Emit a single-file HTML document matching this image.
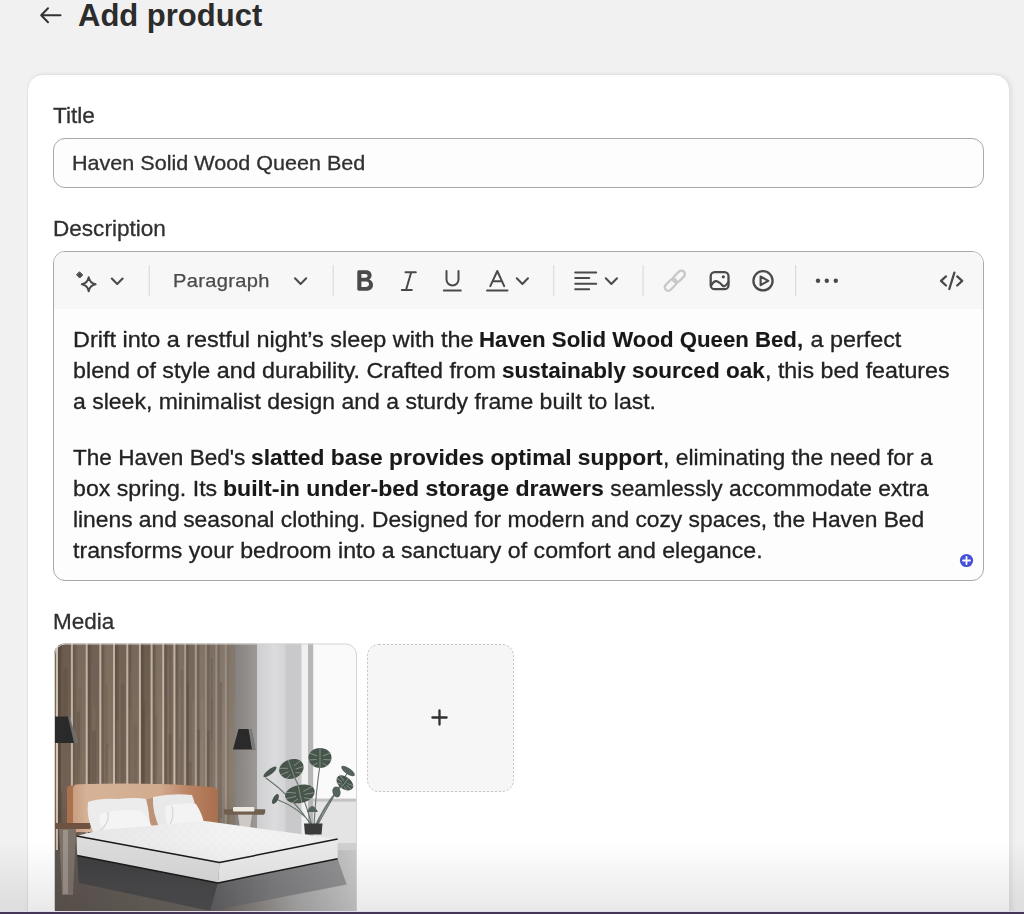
<!DOCTYPE html>
<html><head><meta charset="utf-8">
<style>
*{box-sizing:border-box;margin:0;padding:0}
html,body{width:1024px;height:914px;overflow:hidden;background:#f1f1f1;font-family:"Liberation Sans",sans-serif;color:#303030}
.abs{position:absolute}
.t{position:absolute;white-space:pre;transform-origin:0 0;color:#303030;-webkit-text-stroke:0.3px #303030}
#card{left:27px;top:74px;width:983px;height:900px;background:#fff;border-radius:16px;border:1px solid #e3e3e3;box-shadow:2px 0 4px rgba(0,0,0,.07)}
#input{left:53px;top:138px;width:931px;height:50px;border:1px solid #a9a9a9;border-radius:12px;background:#fdfdfd}
#editor{left:53px;top:251px;width:931px;height:330px;border:1px solid #a9a9a9;border-radius:12px;background:#fdfdfd;overflow:hidden}
#toolbar{position:absolute;left:0;top:0;width:100%;height:57px;background:#f7f7f7}
.body{font-size:22px;line-height:31px;color:#222;-webkit-text-stroke:0.3px #222}
.body b{color:#181818;-webkit-text-stroke:0.1px #181818}
.body b{font-weight:bold}
#addbtn{left:367px;top:643.5px;width:147px;height:148px;border-radius:12px;background:#f6f6f6}
#fade{left:0;top:840px;width:1024px;height:72px;background:linear-gradient(rgba(0,0,0,0),rgba(0,0,0,.085))}
#purple{left:0;top:911px;width:1024px;height:3px;background:#463656;border-top:1px solid #e4dce8}
</style></head><body>
<svg class="abs" style="left:0;top:0" width="80" height="40" viewBox="0 0 80 40"><path d="M60.5 15.2H41.5M48 8.2L41.2 15.2L48 22.2" fill="none" stroke="#333" stroke-width="2" stroke-linecap="round" stroke-linejoin="round"/></svg>
<div class="t" style="left:78px;top:-2px;font-size:31px;line-height:36px;font-weight:bold;color:#2c2c2c;-webkit-text-stroke:0">Add product</div>
<div id="card" class="abs"></div>
<div class="t" style="left:53px;top:103px;font-size:22px;line-height:26px;transform:scaleX(1.028)">Title</div>
<div id="input" class="abs"></div>
<div class="t" style="left:72px;top:151px;font-size:21px;line-height:24px;transform:scaleX(1.027)">Haven Solid Wood Queen Bed</div>
<div class="t" style="left:53px;top:216px;font-size:22px;line-height:26px;transform:scaleX(1.025)">Description</div>
<div id="editor" class="abs"><div id="toolbar"></div></div>
<svg class="abs" style="left:0;top:0" width="1024" height="320" viewBox="0 0 1024 320">
<g fill="none" stroke="#4a4a4a" stroke-width="2" stroke-linecap="round" stroke-linejoin="round">
<path d="M79.7 272L82.7 275L79.7 278L76.7 275Z" fill="#4a4a4a" stroke-width="1"/>
<path d="M88.7 277.3Q89.8 283.2 95.6 284.3Q89.8 285.4 88.7 291.2Q87.6 285.4 81.8 284.3Q87.6 283.2 88.7 277.3Z"/>
<path d="M111.8 278.6L117.2 284L122.6 278.6" stroke-width="2.1"/>
<path d="M295 278.3L300.6 284L306.2 278.3"/>
<path d="M446.5 271v8.5a6 6 0 0 0 12 0V271"/>
<path d="M443.8 290.5h17"/>
<path d="M405.5 272.2h10.3M401.8 290h10M411.2 272.2L406 290"/>
<path d="M490.3 286.2L497.3 271L504.2 286.2M492.6 281.2h9.3"/>
<path d="M487 290.5h20.5"/>
<path d="M516.8 278.3L522.4 284L528 278.3"/>
<path d="M575.2 272.5h21M575.2 278.1h14M575.2 283.7h21M575.2 289.2h14"/>
<path d="M605.8 278.3L611.4 284L617 278.3"/>
<rect x="710.7" y="272.2" width="17.8" height="17" rx="4" stroke-width="2.3"/>
<circle cx="723.3" cy="276.8" r="1.6" fill="#4a4a4a" stroke="none"/>
<path d="M711.5 285Q714.5 280 717.5 281.5T722.5 285.5T728.5 282" stroke-width="2.2"/>
<circle cx="763" cy="280.8" r="9.6" stroke-width="2.3"/>
<path d="M760.6 276.5L768.3 280.8L760.6 285.2Z" stroke-width="2.1"/>
<path d="M946 276.4L941 280.9L946 285.5M957.2 276.4L962.2 280.9L957.2 285.5M954.4 272.6L949.3 289" stroke-width="2.3"/>
</g>
<g transform="rotate(-45 674.8 280.7)" fill="none" stroke="#c8c8c8" stroke-width="2.3"><rect x="662" y="277.2" width="14" height="7" rx="3.5"/><rect x="673.6" y="277.2" width="14" height="7" rx="3.5"/></g>
<g fill="#4a4a4a"><circle cx="818" cy="280.8" r="2.2"/><circle cx="826.8" cy="280.8" r="2.2"/><circle cx="835.8" cy="280.8" r="2.2"/></g>
<path fill-rule="evenodd" fill="#4a4a4a" d="M359 270.2H366C369.5 270.2 371.6 272.4 371.6 275.2C371.6 277.2 370.6 278.7 369.2 279.5C371.4 280.3 373 282.3 373 285C373 288.3 370.6 290.7 367 290.7H359C358 290.7 357.3 290 357.3 289V271.9C357.3 270.9 358 270.2 359 270.2ZM361.4 273.9H365.4C366.8 273.9 367.6 274.6 367.6 275.8C367.6 277 366.8 277.8 365.4 277.8H361.4ZM361.4 281.5H366.3C368 281.5 369 282.5 369 284.1C369 285.8 368 286.9 366.3 286.9H361.4Z"/>
<g fill="#dcdcdc"><rect x="148.7" y="265" width="1.2" height="31"/><rect x="332.6" y="265" width="1.2" height="31"/><rect x="553.1" y="265" width="1.2" height="31"/><rect x="642.5" y="265" width="1.2" height="31"/><rect x="795" y="265" width="1.2" height="31"/></g>
</svg>
<div class="abs" style="left:173px;top:269.5px;font-size:18.5px;line-height:22px;letter-spacing:0.3px;color:#4a4a4a;white-space:pre;transform-origin:0 0;transform:scaleX(1.085);-webkit-text-stroke:0.25px #4a4a4a">Paragraph</div>
<div class="t body" style="left:72.50px;top:324.18px;transform:scaleX(1.0645)">Drift into a restful night’s sleep with the </div>
<div class="t body" style="left:479.49px;top:324.18px;transform:scaleX(1.0094)"><b>Haven Solid Wood Queen Bed,</b></div>
<div class="t body" style="left:804.37px;top:324.18px;transform:scaleX(1.0612)"> a perfect</div>
<div class="t body" style="left:72.50px;top:355.48px;transform:scaleX(1.0589)">blend of style and durability. Crafted from </div>
<div class="t body" style="left:501.98px;top:355.48px;transform:scaleX(1.0230)"><b>sustainably sourced oak</b></div>
<div class="t body" style="left:765.29px;top:355.48px;transform:scaleX(1.0552)">, this bed features</div>
<div class="t body" style="left:72.50px;top:386.28px;transform:scaleX(1.0455)">a sleek, minimalist design and a sturdy frame built to last.</div>
<div class="t body" style="left:72.50px;top:442.18px;transform:scaleX(1.0257)">The Haven Bed's </div>
<div class="t body" style="left:251.16px;top:442.18px;transform:scaleX(1.0361)"><b>slatted base provides optimal support</b></div>
<div class="t body" style="left:662.92px;top:442.18px;transform:scaleX(1.0405)">, eliminating the need for a</div>
<div class="t body" style="left:72.50px;top:472.68px;transform:scaleX(1.0529)">box spring. Its </div>
<div class="t body" style="left:223.15px;top:472.68px;transform:scaleX(1.0493)"><b>built-in under-bed storage drawers</b></div>
<div class="t body" style="left:603.77px;top:472.68px;transform:scaleX(1.0332)"> seamlessly accommodate extra</div>
<div class="t body" style="left:72.50px;top:503.68px;transform:scaleX(1.0357)">linens and seasonal clothing. Designed for modern and cozy spaces, the Haven Bed</div>
<div class="t body" style="left:72.50px;top:534.88px;transform:scaleX(1.0521)">transforms your bedroom into a sanctuary of comfort and elegance.</div>
<svg class="abs" style="left:959px;top:553px" width="15" height="15" viewBox="0 0 15 15"><circle cx="7.5" cy="7.5" r="6.6" fill="#4650d8"/><path d="M7.5 4v7M4 7.5h7" stroke="#fff" stroke-width="1.8" stroke-linecap="round"/></svg>
<div class="t" style="left:53px;top:609px;font-size:22px;line-height:26px;transform:scaleX(1.022)">Media</div>
<svg class="abs" style="left:54px;top:643px" width="303" height="271" viewBox="54 643 303 271">
<defs>
<filter id="bl" x="-5%" y="-5%" width="110%" height="110%"><feGaussianBlur stdDeviation="0.45"/></filter>
<clipPath id="pc"><rect x="54" y="643.5" width="302.8" height="290" rx="11"/></clipPath>
<clipPath id="mt"><path d="M76.6 836L100 830L205 821L337.6 839L219.5 862.6Z"/></clipPath>
<linearGradient id="wood" x1="0" x2="1" y1="0" y2="0"><stop offset="0" stop-color="#7a6a5c"/><stop offset=".5" stop-color="#7e6e60"/><stop offset="1" stop-color="#8a7e72"/></linearGradient>
<linearGradient id="woodv" x1="0" x2="0" y1="0" y2="1"><stop offset="0" stop-color="#000" stop-opacity=".05"/><stop offset=".6" stop-color="#000" stop-opacity="0"/><stop offset="1" stop-color="#000" stop-opacity=".15"/></linearGradient>
<linearGradient id="conc" x1="0" x2="1"><stop offset="0" stop-color="#858280"/><stop offset="1" stop-color="#9b9896"/></linearGradient>
<linearGradient id="wall" x1="0" x2="1"><stop offset="0" stop-color="#cdced0"/><stop offset=".6" stop-color="#dcdcde"/><stop offset="1" stop-color="#d4d4d6"/></linearGradient>
<linearGradient id="hb" x1="0" x2="1"><stop offset="0" stop-color="#c99e80"/><stop offset=".1" stop-color="#d6b398"/><stop offset=".6" stop-color="#d2ab8e"/><stop offset=".8" stop-color="#b98262"/><stop offset="1" stop-color="#a86f4e"/></linearGradient>
<linearGradient id="mtop" x1="0" x2="1" y1="0" y2="0"><stop offset="0" stop-color="#e6e6e6"/><stop offset=".6" stop-color="#f3f3f3"/><stop offset="1" stop-color="#f0f0f0"/></linearGradient>
<linearGradient id="floorL" x1="0" x2="1"><stop offset="0" stop-color="#5c544e"/><stop offset=".55" stop-color="#6c6660"/><stop offset=".8" stop-color="#a9a8a8"/><stop offset="1" stop-color="#c9c9ca"/></linearGradient>
<linearGradient id="baseL" x1="0" x2="0" y1="0" y2="1"><stop offset="0" stop-color="#3e3e40"/><stop offset="1" stop-color="#505052"/></linearGradient>
<linearGradient id="baseR" x1="0" x2="1"><stop offset="0" stop-color="#606063"/><stop offset=".45" stop-color="#7c7c7f"/><stop offset="1" stop-color="#939396"/></linearGradient>
</defs>
<g clip-path="url(#pc)"><g filter="url(#bl)">
<rect x="54" y="643" width="303" height="270" fill="#e9e9ea"/>
<rect x="54" y="643" width="182" height="240" fill="url(#wood)"/>
<rect x="58.0" y="643" width="12.9" height="240" fill="#5e4e42" opacity="0.35"/><rect x="58.0" y="643" width="4.5" height="240" fill="#2e241e" opacity="0.10"/><rect x="60.9" y="721.1" width="2.0" height="70.1" fill="#a89482" opacity="0.14"/><rect x="63.3" y="668.8" width="4.2" height="72.0" fill="#3a2c22" opacity="0.12"/><rect x="58.8" y="742.2" width="2.8" height="77.3" fill="#3a2c22" opacity="0.09"/><rect x="72.9" y="643" width="12.8" height="240" fill="#8a7a6a" opacity="0.35"/><rect x="72.9" y="643" width="4.5" height="240" fill="#2e241e" opacity="0.10"/><rect x="78.1" y="760.2" width="2.7" height="66.5" fill="#a89482" opacity="0.18"/><rect x="76.7" y="711.5" width="3.1" height="138.4" fill="#3a2c22" opacity="0.16"/><rect x="78.1" y="687.7" width="3.4" height="136.7" fill="#3a2c22" opacity="0.07"/><rect x="87.7" y="643" width="11.6" height="240" fill="#6a5a4c" opacity="0.35"/><rect x="87.7" y="643" width="4.1" height="240" fill="#2e241e" opacity="0.10"/><rect x="92.7" y="706.8" width="2.7" height="168.8" fill="#a89482" opacity="0.13"/><rect x="90.6" y="664.6" width="2.1" height="169.2" fill="#a89482" opacity="0.07"/><rect x="92.0" y="730.5" width="3.7" height="100.3" fill="#3a2c22" opacity="0.20"/><rect x="101.3" y="643" width="11.7" height="240" fill="#93826f" opacity="0.35"/><rect x="101.3" y="643" width="4.1" height="240" fill="#2e241e" opacity="0.10"/><rect x="105.5" y="684.0" width="1.8" height="190.7" fill="#3a2c22" opacity="0.12"/><rect x="107.6" y="748.1" width="2.9" height="103.9" fill="#a89482" opacity="0.16"/><rect x="106.0" y="743.8" width="2.6" height="192.3" fill="#3a2c22" opacity="0.13"/><rect x="115.0" y="643" width="11.3" height="240" fill="#6e5d50" opacity="0.35"/><rect x="115.0" y="643" width="4.0" height="240" fill="#2e241e" opacity="0.10"/><rect x="115.5" y="720.7" width="3.2" height="199.0" fill="#a89482" opacity="0.18"/><rect x="120.7" y="684.6" width="3.7" height="191.7" fill="#3a2c22" opacity="0.11"/><rect x="118.9" y="677.5" width="1.9" height="163.4" fill="#a89482" opacity="0.12"/><rect x="128.3" y="643" width="10.6" height="240" fill="#7f6e5e" opacity="0.35"/><rect x="128.3" y="643" width="3.7" height="240" fill="#2e241e" opacity="0.10"/><rect x="128.9" y="708.9" width="2.4" height="183.7" fill="#a89482" opacity="0.17"/><rect x="133.5" y="724.9" width="3.7" height="113.3" fill="#3a2c22" opacity="0.09"/><rect x="129.6" y="671.0" width="1.8" height="127.9" fill="#a89482" opacity="0.14"/><rect x="140.9" y="643" width="9.7" height="240" fill="#5a4a3e" opacity="0.35"/><rect x="140.9" y="643" width="3.4" height="240" fill="#2e241e" opacity="0.10"/><rect x="142.8" y="707.2" width="1.5" height="145.4" fill="#3a2c22" opacity="0.10"/><rect x="145.6" y="717.1" width="2.3" height="154.7" fill="#a89482" opacity="0.07"/><rect x="143.6" y="700.8" width="2.0" height="116.1" fill="#3a2c22" opacity="0.09"/><rect x="152.6" y="643" width="9.6" height="240" fill="#8c7b6b" opacity="0.35"/><rect x="152.6" y="643" width="3.4" height="240" fill="#2e241e" opacity="0.10"/><rect x="155.6" y="715.1" width="1.4" height="74.3" fill="#3a2c22" opacity="0.14"/><rect x="159.0" y="651.4" width="2.5" height="89.1" fill="#a89482" opacity="0.11"/><rect x="159.0" y="699.9" width="2.5" height="76.1" fill="#a89482" opacity="0.13"/><rect x="164.2" y="643" width="9.2" height="240" fill="#705f52" opacity="0.35"/><rect x="164.2" y="643" width="3.2" height="240" fill="#2e241e" opacity="0.10"/><rect x="167.3" y="660.3" width="1.8" height="165.0" fill="#a89482" opacity="0.16"/><rect x="169.5" y="645.8" width="1.4" height="193.1" fill="#3a2c22" opacity="0.13"/><rect x="168.6" y="734.0" width="3.0" height="101.7" fill="#3a2c22" opacity="0.15"/><rect x="175.4" y="643" width="8.7" height="240" fill="#857565" opacity="0.35"/><rect x="175.4" y="643" width="3.0" height="240" fill="#2e241e" opacity="0.10"/><rect x="179.6" y="687.0" width="1.6" height="83.4" fill="#a89482" opacity="0.17"/><rect x="179.3" y="737.6" width="2.3" height="166.2" fill="#3a2c22" opacity="0.09"/><rect x="180.4" y="670.2" width="2.5" height="132.5" fill="#3a2c22" opacity="0.11"/><rect x="186.1" y="643" width="8.7" height="240" fill="#6c5c50" opacity="0.35"/><rect x="186.1" y="643" width="3.0" height="240" fill="#2e241e" opacity="0.10"/><rect x="192.1" y="699.7" width="2.6" height="87.1" fill="#a89482" opacity="0.14"/><rect x="188.8" y="761.6" width="2.9" height="193.7" fill="#3a2c22" opacity="0.11"/><rect x="186.7" y="683.5" width="2.0" height="127.6" fill="#3a2c22" opacity="0.20"/><rect x="196.8" y="643" width="8.1" height="240" fill="#8a7b6e" opacity="0.35"/><rect x="196.8" y="643" width="2.8" height="240" fill="#2e241e" opacity="0.10"/><rect x="199.5" y="739.0" width="2.2" height="71.9" fill="#a89482" opacity="0.15"/><rect x="201.2" y="700.4" width="2.4" height="85.0" fill="#a89482" opacity="0.17"/><rect x="197.3" y="729.6" width="2.7" height="124.8" fill="#3a2c22" opacity="0.16"/><rect x="206.9" y="643" width="8.4" height="240" fill="#7a6c60" opacity="0.35"/><rect x="206.9" y="643" width="2.9" height="240" fill="#2e241e" opacity="0.10"/><rect x="211.2" y="658.2" width="1.3" height="81.2" fill="#3a2c22" opacity="0.19"/><rect x="210.5" y="699.9" width="2.2" height="191.2" fill="#3a2c22" opacity="0.08"/><rect x="207.0" y="730.2" width="2.6" height="74.4" fill="#3a2c22" opacity="0.16"/><rect x="217.3" y="643" width="7.5" height="240" fill="#8c8074" opacity="0.35"/><rect x="217.3" y="643" width="2.6" height="240" fill="#2e241e" opacity="0.10"/><rect x="219.6" y="742.1" width="2.4" height="89.5" fill="#a89482" opacity="0.10"/><rect x="219.9" y="682.1" width="2.2" height="136.2" fill="#3a2c22" opacity="0.18"/><rect x="222.1" y="698.0" width="1.5" height="141.7" fill="#a89482" opacity="0.19"/>
<rect x="58.0" y="643" width="2.5" height="240" fill="#4a3c32" opacity="0.24"/><rect x="56.0" y="643" width="2" height="240" fill="#dccbb9" opacity="0.80"/><rect x="58.0" y="643" width="2.5" height="240" fill="#4a3c32" opacity="0.24"/><rect x="56.0" y="643" width="2" height="240" fill="#dccbb9" opacity="0.80"/><rect x="72.9" y="643" width="2.5" height="240" fill="#4a3c32" opacity="0.24"/><rect x="70.9" y="643" width="2" height="240" fill="#dccbb9" opacity="0.80"/><rect x="87.7" y="643" width="2.5" height="240" fill="#4a3c32" opacity="0.24"/><rect x="85.7" y="643" width="2" height="240" fill="#dccbb9" opacity="0.80"/><rect x="101.3" y="643" width="2.5" height="240" fill="#4a3c32" opacity="0.24"/><rect x="99.3" y="643" width="2" height="240" fill="#dccbb9" opacity="0.80"/><rect x="115.0" y="643" width="2.5" height="240" fill="#4a3c32" opacity="0.24"/><rect x="113.0" y="643" width="2" height="240" fill="#dccbb9" opacity="0.80"/><rect x="128.3" y="643" width="2.5" height="240" fill="#4a3c32" opacity="0.24"/><rect x="126.3" y="643" width="2" height="240" fill="#dccbb9" opacity="0.80"/><rect x="140.9" y="643" width="2.5" height="240" fill="#4a3c32" opacity="0.24"/><rect x="138.9" y="643" width="2" height="240" fill="#dccbb9" opacity="0.80"/><rect x="152.6" y="643" width="2.5" height="240" fill="#4a3c32" opacity="0.24"/><rect x="150.6" y="643" width="2" height="240" fill="#dccbb9" opacity="0.80"/><rect x="164.2" y="643" width="2.5" height="240" fill="#4a3c32" opacity="0.24"/><rect x="162.2" y="643" width="2" height="240" fill="#dccbb9" opacity="0.80"/><rect x="175.4" y="643" width="2.5" height="240" fill="#4a3c32" opacity="0.24"/><rect x="173.4" y="643" width="2" height="240" fill="#dccbb9" opacity="0.80"/><rect x="186.1" y="643" width="2.5" height="240" fill="#4a3c32" opacity="0.15"/><rect x="184.1" y="643" width="2" height="240" fill="#dccbb9" opacity="0.50"/><rect x="196.8" y="643" width="2.5" height="240" fill="#4a3c32" opacity="0.15"/><rect x="194.8" y="643" width="2" height="240" fill="#dccbb9" opacity="0.50"/><rect x="206.9" y="643" width="2.5" height="240" fill="#4a3c32" opacity="0.09"/><rect x="204.9" y="643" width="2" height="240" fill="#dccbb9" opacity="0.30"/><rect x="217.3" y="643" width="2.5" height="240" fill="#4a3c32" opacity="0.09"/><rect x="215.3" y="643" width="2" height="240" fill="#dccbb9" opacity="0.30"/><rect x="226.8" y="643" width="2.5" height="240" fill="#4a3c32" opacity="0.09"/><rect x="224.8" y="643" width="2" height="240" fill="#dccbb9" opacity="0.30"/>
<rect x="54" y="643" width="182" height="240" fill="url(#woodv)"/>
<rect x="235.2" y="643" width="22" height="206" fill="url(#conc)"/>
<rect x="257" y="643" width="28.5" height="206" fill="url(#wall)"/>
<rect x="285.3" y="643" width="16.5" height="206" fill="#c9c9cb"/>
<rect x="301.6" y="643" width="6.4" height="206" fill="#f0f0f0"/>
<rect x="308" y="643" width="5.4" height="206" fill="#b6b6b8"/>
<rect x="313.4" y="643" width="44" height="156" fill="#fafafa"/>
<rect x="313.4" y="800" width="44" height="45" fill="#e4e4e4"/>
<rect x="313.4" y="798.6" width="44" height="3" fill="#c2c2c2"/>
<rect x="301" y="843" width="56" height="8" fill="#d0d0d0"/>
<rect x="54" y="850" width="303" height="70" fill="url(#floorL)"/>
<path d="M54 716.5H69.5L77.5 743H54Z" fill="#2a2a2a"/>
<path d="M68 716.5H70L78 743H74Z" fill="#a0a0a0" opacity=".55"/>
<path d="M238.5 729H251.5L255.5 749.4H233Z" fill="#2a2a2a"/>
<path d="M248.5 729H251.5L255.5 749.4H252Z" fill="#a8a8a8" opacity=".65"/>
<g stroke="#66726b" stroke-width="1.1" fill="none" stroke-linecap="round"><path d="M314 826Q316 790 320 765M312 826Q304 795 292 772M316 826Q328 800 343 784M313 826Q300 808 276 799M312 826Q292 796 266 778M317 826Q336 792 349 770M315 826Q325 805 336 792"/></g><g transform="translate(320 758) rotate(0) scale(11.5 10)"><path d="M0 -1C.55 -1 1 -.6 1 -.05C1 .55 .55 1 0 1C-.55 1 -1 .55 -1 -.05C-1 -.6 -.55 -1 0 -1Z" fill="#46544b"/><path d="M.25 -.2L1 -.55M.3 .15L1 .2M.2 .5L.75 .85M-.25 -.2L-1 -.55M-.3 .15L-1 .2M-.2 .5L-.75 .85M0 -1V1" stroke="#b9c2bc" stroke-width=".9" vector-effect="non-scaling-stroke" opacity=".6" fill="none"/></g><g transform="translate(291.5 769) rotate(-20) scale(12.5 9.5)"><path d="M0 -1C.55 -1 1 -.6 1 -.05C1 .55 .55 1 0 1C-.55 1 -1 .55 -1 -.05C-1 -.6 -.55 -1 0 -1Z" fill="#46544b"/><path d="M.25 -.2L1 -.55M.3 .15L1 .2M.2 .5L.75 .85M-.25 -.2L-1 -.55M-.3 .15L-1 .2M-.2 .5L-.75 .85M0 -1V1" stroke="#b9c2bc" stroke-width=".9" vector-effect="non-scaling-stroke" opacity=".6" fill="none"/></g><g transform="translate(300 794) rotate(-12) scale(15 9)"><path d="M0 -1C.55 -1 1 -.6 1 -.05C1 .55 .55 1 0 1C-.55 1 -1 .55 -1 -.05C-1 -.6 -.55 -1 0 -1Z" fill="#46544b"/><path d="M.25 -.2L1 -.55M.3 .15L1 .2M.2 .5L.75 .85M-.25 -.2L-1 -.55M-.3 .15L-1 .2M-.2 .5L-.75 .85M0 -1V1" stroke="#b9c2bc" stroke-width=".9" vector-effect="non-scaling-stroke" opacity=".6" fill="none"/></g><g transform="translate(344.8 783) rotate(38) scale(9.5 6)"><path d="M0 -1C.55 -1 1 -.6 1 -.05C1 .55 .55 1 0 1C-.55 1 -1 .55 -1 -.05C-1 -.6 -.55 -1 0 -1Z" fill="#4a5750"/><path d="M.25 -.2L1 -.55M.3 .15L1 .2M.2 .5L.75 .85M-.25 -.2L-1 -.55M-.3 .15L-1 .2M-.2 .5L-.75 .85M0 -1V1" stroke="#b9c2bc" stroke-width=".9" vector-effect="non-scaling-stroke" opacity=".6" fill="none"/></g><g transform="translate(348 771) rotate(35) scale(8 3)"><path d="M0 -1C.55 -1 1 -.6 1 -.05C1 .55 .55 1 0 1C-.55 1 -1 .55 -1 -.05C-1 -.6 -.55 -1 0 -1Z" fill="#56625b"/></g><g transform="translate(275.5 799) rotate(-60) scale(5.5 2.5)"><path d="M0 -1C.55 -1 1 -.6 1 -.05C1 .55 .55 1 0 1C-.55 1 -1 .55 -1 -.05C-1 -.6 -.55 -1 0 -1Z" fill="#4a5750"/></g><g transform="translate(270 772) rotate(-38) scale(8 2.6)"><path d="M0 -1C.55 -1 1 -.6 1 -.05C1 .55 .55 1 0 1C-.55 1 -1 .55 -1 -.05C-1 -.6 -.55 -1 0 -1Z" fill="#4a5750"/></g><g transform="translate(336.5 792) rotate(-15) scale(4 5.5)"><path d="M0 -1C.55 -1 1 -.6 1 -.05C1 .55 .55 1 0 1C-.55 1 -1 .55 -1 -.05C-1 -.6 -.55 -1 0 -1Z" fill="#56625b"/></g><path d="M307 812Q312 800 318 812Z" fill="#56625b"/>
<path d="M304 823.5H322.5L321.5 834.5H305Z" fill="#3a3a3a"/>
<path d="M67 832V789Q67 785.5 70 785.5H73V832Z" fill="#a9714e"/>
<path d="M73 832V788Q73 784.5 78 784.3Q145 782.5 190 785.5Q205 786.5 213 787.2Q218 787.8 218 793V832Z" fill="url(#hb)"/>

<path d="M54 823H91Q92 826 90 829H54Z" fill="#6e5242"/>
<path d="M59 829H76L73 895H62Z" fill="#7d726a"/>
<rect x="63" y="830" width="5" height="64" fill="#b0a69e" opacity=".6"/>
<path d="M224 809.3H265Q266 812 264 814.8H225Q223 812 224 809.3Z" fill="#705e50"/>
<rect x="233" y="807" width="21.4" height="4.5" rx="1" fill="#eee9e3"/>
<path d="M238 814.8H252L250 828H240Z" fill="#cdc9c5"/>
<path d="M140 801L156 797L158 830H136Z" fill="#a97a5a" opacity=".5"/>
<path d="M88 802Q100 798 118 799Q136 797 146 799Q150 814 150 830Q120 836 94 834Q86 818 88 802Z" fill="#ececec"/>
<path d="M100 814Q122 808 142 811Q151 820 153 832Q126 837 104 835Q98 824 100 814Z" fill="#f4f4f4"/>
<path d="M98 832Q110 824 108 812" stroke="#cfcfcf" stroke-width="1.2" fill="none" opacity=".8"/>
<path d="M153 797Q172 793 192 795Q197 808 199 826Q178 830 160 829Q152 812 153 797Z" fill="#e9e9e9"/>
<path d="M166 806Q182 802 196 804Q203 815 205 827Q186 831 169 829Q164 818 166 806Z" fill="#f3f3f3"/>
<path d="M168 828Q175 818 172 806" stroke="#cfcfcf" stroke-width="1.2" fill="none" opacity=".8"/>
<path d="M77.2 855.6L218 882.9L210.5 911L78.8 882.9Z" fill="url(#baseL)"/>
<path d="M218 882.9L337.6 858.7L346.7 884.4L210.5 911Z" fill="url(#baseR)"/>
<path d="M76.6 836L100 830L205 821L337.6 839L219.5 862.6Z" fill="url(#mtop)"/>
<g clip-path="url(#mt)"><path d="M-48 810L12 870" stroke="#cfcfcf" stroke-width=".6" opacity=".15"/><path d="M12 810L-48 870" stroke="#d4d4d4" stroke-width=".6" opacity=".12"/><path d="M-39 810L21 870" stroke="#cfcfcf" stroke-width=".6" opacity=".15"/><path d="M21 810L-39 870" stroke="#d4d4d4" stroke-width=".6" opacity=".12"/><path d="M-30 810L30 870" stroke="#cfcfcf" stroke-width=".6" opacity=".15"/><path d="M30 810L-30 870" stroke="#d4d4d4" stroke-width=".6" opacity=".12"/><path d="M-21 810L39 870" stroke="#cfcfcf" stroke-width=".6" opacity=".15"/><path d="M39 810L-21 870" stroke="#d4d4d4" stroke-width=".6" opacity=".12"/><path d="M-12 810L48 870" stroke="#cfcfcf" stroke-width=".6" opacity=".15"/><path d="M48 810L-12 870" stroke="#d4d4d4" stroke-width=".6" opacity=".12"/><path d="M-3 810L57 870" stroke="#cfcfcf" stroke-width=".6" opacity=".15"/><path d="M57 810L-3 870" stroke="#d4d4d4" stroke-width=".6" opacity=".12"/><path d="M6 810L66 870" stroke="#cfcfcf" stroke-width=".6" opacity=".15"/><path d="M66 810L6 870" stroke="#d4d4d4" stroke-width=".6" opacity=".12"/><path d="M15 810L75 870" stroke="#cfcfcf" stroke-width=".6" opacity=".15"/><path d="M75 810L15 870" stroke="#d4d4d4" stroke-width=".6" opacity=".12"/><path d="M24 810L84 870" stroke="#cfcfcf" stroke-width=".6" opacity=".15"/><path d="M84 810L24 870" stroke="#d4d4d4" stroke-width=".6" opacity=".12"/><path d="M33 810L93 870" stroke="#cfcfcf" stroke-width=".6" opacity=".15"/><path d="M93 810L33 870" stroke="#d4d4d4" stroke-width=".6" opacity=".12"/><path d="M42 810L102 870" stroke="#cfcfcf" stroke-width=".6" opacity=".15"/><path d="M102 810L42 870" stroke="#d4d4d4" stroke-width=".6" opacity=".12"/><path d="M51 810L111 870" stroke="#cfcfcf" stroke-width=".6" opacity=".15"/><path d="M111 810L51 870" stroke="#d4d4d4" stroke-width=".6" opacity=".12"/><path d="M60 810L120 870" stroke="#cfcfcf" stroke-width=".6" opacity=".15"/><path d="M120 810L60 870" stroke="#d4d4d4" stroke-width=".6" opacity=".12"/><path d="M69 810L129 870" stroke="#cfcfcf" stroke-width=".6" opacity=".15"/><path d="M129 810L69 870" stroke="#d4d4d4" stroke-width=".6" opacity=".12"/><path d="M78 810L138 870" stroke="#cfcfcf" stroke-width=".6" opacity=".15"/><path d="M138 810L78 870" stroke="#d4d4d4" stroke-width=".6" opacity=".12"/><path d="M87 810L147 870" stroke="#cfcfcf" stroke-width=".6" opacity=".15"/><path d="M147 810L87 870" stroke="#d4d4d4" stroke-width=".6" opacity=".12"/><path d="M96 810L156 870" stroke="#cfcfcf" stroke-width=".6" opacity=".15"/><path d="M156 810L96 870" stroke="#d4d4d4" stroke-width=".6" opacity=".12"/><path d="M105 810L165 870" stroke="#cfcfcf" stroke-width=".6" opacity=".15"/><path d="M165 810L105 870" stroke="#d4d4d4" stroke-width=".6" opacity=".12"/><path d="M114 810L174 870" stroke="#cfcfcf" stroke-width=".6" opacity=".15"/><path d="M174 810L114 870" stroke="#d4d4d4" stroke-width=".6" opacity=".12"/><path d="M123 810L183 870" stroke="#cfcfcf" stroke-width=".6" opacity=".15"/><path d="M183 810L123 870" stroke="#d4d4d4" stroke-width=".6" opacity=".12"/><path d="M132 810L192 870" stroke="#cfcfcf" stroke-width=".6" opacity=".15"/><path d="M192 810L132 870" stroke="#d4d4d4" stroke-width=".6" opacity=".12"/><path d="M141 810L201 870" stroke="#cfcfcf" stroke-width=".6" opacity=".15"/><path d="M201 810L141 870" stroke="#d4d4d4" stroke-width=".6" opacity=".12"/><path d="M150 810L210 870" stroke="#cfcfcf" stroke-width=".6" opacity=".15"/><path d="M210 810L150 870" stroke="#d4d4d4" stroke-width=".6" opacity=".12"/><path d="M159 810L219 870" stroke="#cfcfcf" stroke-width=".6" opacity=".15"/><path d="M219 810L159 870" stroke="#d4d4d4" stroke-width=".6" opacity=".12"/><path d="M168 810L228 870" stroke="#cfcfcf" stroke-width=".6" opacity=".15"/><path d="M228 810L168 870" stroke="#d4d4d4" stroke-width=".6" opacity=".12"/><path d="M177 810L237 870" stroke="#cfcfcf" stroke-width=".6" opacity=".15"/><path d="M237 810L177 870" stroke="#d4d4d4" stroke-width=".6" opacity=".12"/><path d="M186 810L246 870" stroke="#cfcfcf" stroke-width=".6" opacity=".15"/><path d="M246 810L186 870" stroke="#d4d4d4" stroke-width=".6" opacity=".12"/><path d="M195 810L255 870" stroke="#cfcfcf" stroke-width=".6" opacity=".15"/><path d="M255 810L195 870" stroke="#d4d4d4" stroke-width=".6" opacity=".12"/><path d="M204 810L264 870" stroke="#cfcfcf" stroke-width=".6" opacity=".15"/><path d="M264 810L204 870" stroke="#d4d4d4" stroke-width=".6" opacity=".12"/><path d="M213 810L273 870" stroke="#cfcfcf" stroke-width=".6" opacity=".15"/><path d="M273 810L213 870" stroke="#d4d4d4" stroke-width=".6" opacity=".12"/><path d="M222 810L282 870" stroke="#cfcfcf" stroke-width=".6" opacity=".15"/><path d="M282 810L222 870" stroke="#d4d4d4" stroke-width=".6" opacity=".12"/><path d="M231 810L291 870" stroke="#cfcfcf" stroke-width=".6" opacity=".15"/><path d="M291 810L231 870" stroke="#d4d4d4" stroke-width=".6" opacity=".12"/><path d="M240 810L300 870" stroke="#cfcfcf" stroke-width=".6" opacity=".15"/><path d="M300 810L240 870" stroke="#d4d4d4" stroke-width=".6" opacity=".12"/><path d="M249 810L309 870" stroke="#cfcfcf" stroke-width=".6" opacity=".15"/><path d="M309 810L249 870" stroke="#d4d4d4" stroke-width=".6" opacity=".12"/><path d="M258 810L318 870" stroke="#cfcfcf" stroke-width=".6" opacity=".15"/><path d="M318 810L258 870" stroke="#d4d4d4" stroke-width=".6" opacity=".12"/><path d="M267 810L327 870" stroke="#cfcfcf" stroke-width=".6" opacity=".15"/><path d="M327 810L267 870" stroke="#d4d4d4" stroke-width=".6" opacity=".12"/><path d="M276 810L336 870" stroke="#cfcfcf" stroke-width=".6" opacity=".15"/><path d="M336 810L276 870" stroke="#d4d4d4" stroke-width=".6" opacity=".12"/><path d="M285 810L345 870" stroke="#cfcfcf" stroke-width=".6" opacity=".15"/><path d="M345 810L285 870" stroke="#d4d4d4" stroke-width=".6" opacity=".12"/><path d="M294 810L354 870" stroke="#cfcfcf" stroke-width=".6" opacity=".15"/><path d="M354 810L294 870" stroke="#d4d4d4" stroke-width=".6" opacity=".12"/><path d="M303 810L363 870" stroke="#cfcfcf" stroke-width=".6" opacity=".15"/><path d="M363 810L303 870" stroke="#d4d4d4" stroke-width=".6" opacity=".12"/><path d="M312 810L372 870" stroke="#cfcfcf" stroke-width=".6" opacity=".15"/><path d="M372 810L312 870" stroke="#d4d4d4" stroke-width=".6" opacity=".12"/><path d="M321 810L381 870" stroke="#cfcfcf" stroke-width=".6" opacity=".15"/><path d="M381 810L321 870" stroke="#d4d4d4" stroke-width=".6" opacity=".12"/></g>
<path d="M76.6 836L219.5 862.6L218 882.9L77.2 855.6Z" fill="#dcdcdc"/>
<path d="M219.5 862.6L337.6 839L337.6 858.7L218 882.9Z" fill="#eaeaea"/>
<path d="M76.6 836L219.5 862.6L337.6 839" fill="none" stroke="#1a1a1a" stroke-width="1.5" stroke-linejoin="round"/>
<path d="M77.2 855.6L218 882.9L337.6 858.7" fill="none" stroke="#1a1a1a" stroke-width="1.5" stroke-linejoin="round"/>
</g></g>
<rect x="54.5" y="644" width="302" height="290" rx="11" fill="none" stroke="#d4d4d4" stroke-width="1"/>
</svg>
<div id="addbtn" class="abs"><svg width="147" height="148" style="position:absolute;left:0;top:0"><rect x=".5" y=".5" width="146" height="147" rx="11.5" fill="none" stroke="#c4c4c4" stroke-dasharray="2 2"/></svg></div>
<svg class="abs" style="left:430px;top:708px" width="19" height="19" viewBox="0 0 19 19"><path d="M9.5 2.4v14.2M2.4 9.5h14.2" stroke="#303030" stroke-width="2.3" stroke-linecap="round"/></svg>
<div id="fade" class="abs"></div>
<div id="purple" class="abs"></div>
</body></html>
